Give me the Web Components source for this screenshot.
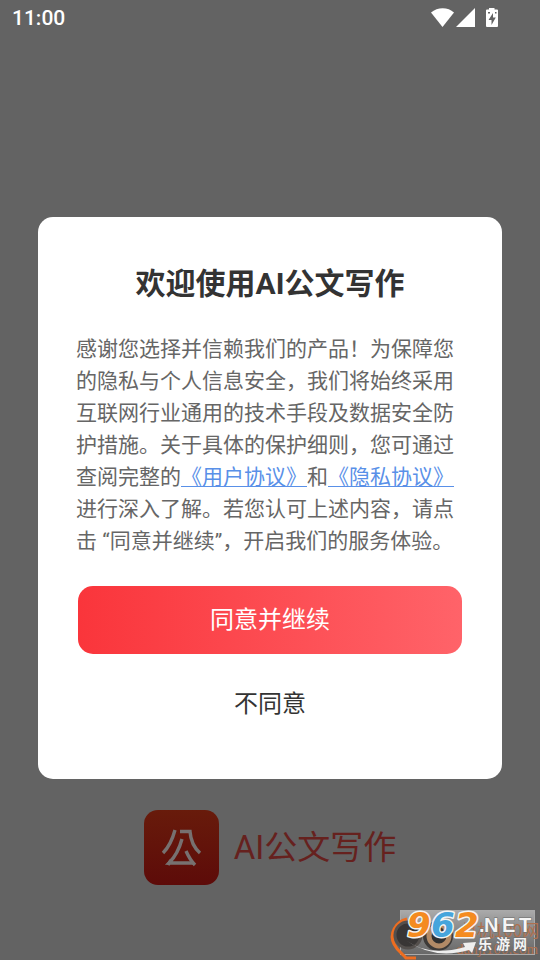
<!DOCTYPE html>
<html lang="zh-CN">
<head>
<meta charset="utf-8">
<meta name="viewport" content="width=device-width, initial-scale=1">
<title>AI公文写作</title>
<style>
  body { margin: 0; background: #636363; font-family: Roboto, "Noto Sans CJK SC", sans-serif; }
</style>
</head>
<body>
<app-screen>
  <status-bar slot="status">11:00</status-bar>
  <app-brand slot="brand">AI公文写作</app-brand>
  <consent-dialog slot="dialog">
    <span slot="title">欢迎使用AI公文写作</span>
    感谢您选择并信赖我们的产品！为保障您的隐私与个人信息安全，我们将始终采用互联网行业通用的技术手段及数据安全防护措施。关于具体的保护细则，您可通过查阅完整的<policy-link to="#terms">《用户协议》</policy-link>和<policy-link to="#privacy">《隐私协议》</policy-link>进行深入了解。若您认可上述内容，请点击 “同意并继续”，开启我们的服务体验。
    <action-button slot="actions" kind="primary">同意并继续</action-button>
    <action-button slot="actions" kind="plain">不同意</action-button>
  </consent-dialog>
  <site-watermark slot="watermark"></site-watermark>
</app-screen>

<script>
const define = (name, html) => customElements.define(name, class extends HTMLElement {
  constructor() {
    super();
    const t = document.createElement('template');
    t.innerHTML = html.trim();
    this.attachShadow({ mode: 'open' }).append(t.content.cloneNode(true));
  }
  connectedCallback() {
    const a = this.shadowRoot.querySelector('a');
    if (a && this.hasAttribute('to')) a.href = this.getAttribute('to');
  }
});

define('app-screen', `
<style>
  :host { display: grid; grid-template-rows: 36px 1fr; min-height: 100vh; position: relative; overflow: hidden; }
  main { display: grid; }
  slot[name=brand]::slotted(*) { grid-area: 1 / 1; align-self: end; justify-self: center; margin-bottom: 75px; }
  slot[name=dialog]::slotted(*) { grid-area: 1 / 1; align-self: center; margin: 0 38px; z-index: 1; }
  slot[name=watermark]::slotted(*) { position: absolute; right: 0; bottom: 0; z-index: 2; }
</style>
<slot name="status"></slot>
<main><slot name="brand"></slot><slot name="dialog"></slot></main>
<slot name="watermark"></slot>`);

define('status-bar', `
<style>
  :host { display: flex; align-items: center; justify-content: space-between; padding: 0 41px 0 12px; color: #fff; font-size: 21px; font-weight: 500; line-height: 38px; }
  svg { display: block; fill: #fff; }
</style>
<span><slot></slot></span>
<svg width="68" height="20" viewBox="0 0 68 20" aria-hidden="true">
  <path d="M0 4.500C6.500-1.200 17-1.200 23 4.500L11.500 19Z"/>
  <path d="M25 19L44 0V19Z"/>
  <path fill-rule="evenodd" d="M56 1.500H58V0H63.500V1.500H66Q67 1.500 67 2.500V18Q67 19 66 19H56Q55 19 55 18V2.500Q55 1.500 56 1.500ZM62 5L57.500 12H60.500V17L64.800 9.500H62ZM57 4V5.500H59V4ZM64 4V5.500H65.500V4Z"/>
</svg>`);

define('app-brand', `
<style>
  :host { display: flex; align-items: center; gap: 15px; color: #66211e; font-size: 33px; line-height: 48px; }
  svg { display: block; }
</style>
<svg width="75" height="75" viewBox="0 0 75 75" aria-hidden="true">
  <defs><linearGradient id="g" x2="0" y2="1"><stop stop-color="#681b0b"/><stop offset="1" stop-color="#5d0b09"/></linearGradient></defs>
  <rect width="75" height="75" rx="14" fill="url(#g)"/>
  <g fill="none" stroke="#777170" stroke-width="3.400">
    <path d="M31 20Q27 35 19 43"/>
    <path d="M36 21.500H46Q47 35 56 43"/>
    <path d="M38 29Q34 44 25 53H50"/>
    <path d="M42 41Q46 50 51 55M27 50L24 55"/>
  </g>
</svg>
<span><slot></slot></span>`);

define('consent-dialog', `
<style>
  :host { display: block; }
  section { background: #fff; border-radius: 15px; padding: 46px 38px 55px; }
  h1 { margin: 0 0 28px; text-align: center; color: #333; font-size: 30px; line-height: 42px; font-weight: 700; }
  p { margin: 0 0 29px; color: #666; font-size: 21px; line-height: 32px; text-spacing-trim: space-all; }
  div { display: grid; gap: 30px; padding: 0 2px; }
</style>
<section role="dialog" aria-labelledby="t">
  <h1 id="t"><slot name="title"></slot></h1>
  <p><slot></slot></p>
  <div><slot name="actions"></slot></div>
</section>`);

define('policy-link', `
<style>
  :host { display: inline; }
  a { color: #5990e8; text-decoration: underline; text-decoration-thickness: 1px; text-underline-offset: 2px; }
</style><a><slot></slot></a>`);

define('action-button', `
<style>
  :host { display: grid; }
  button { border: 0; padding: 0; background: none; color: #333; font: inherit; font-size: 24px; line-height: 40px; justify-self: center; }
  :host([kind=primary]) button { justify-self: stretch; padding: 14px 0; border-radius: 15px; color: #fff; background: linear-gradient(90deg, #fa353b, #ff6369); }
</style><button type="button"><slot></slot></button>`);

define('site-watermark', `
<style>
  :host { display: block; }
  svg { display: block; }
  .han { font-family: "Noto Sans CJK SC", sans-serif; }
  .num { font: italic 700 34px "DejaVu Sans", sans-serif; stroke: #f4f4f4; stroke-width: 3px; paint-order: stroke; stroke-linejoin: round; }
</style>
<svg width="160" height="70" viewBox="0 0 160 70">
  <defs><linearGradient id="w" x2="0" y2="1"><stop stop-color="#aaa"/><stop offset=".45" stop-color="#888"/><stop offset="1" stop-color="#686868"/></linearGradient></defs>
  <rect x="20.500" y="20.500" width="134" height="44" fill="url(#w)" stroke="#aaa" stroke-width="1"/>
  <path d="M27 29C15 32 9 44 14 54C18 62 23 64 26 68H36" fill="none" stroke="#ed6d20" stroke-width="3"/>
  <circle cx="28" cy="45" r="13" fill="#393635" stroke="#55504d" stroke-width="3"/>
  <circle cx="58" cy="46" r="15" fill="#3d3a38"/>
  <circle cx="59" cy="46" r="10" fill="#303030" stroke="#b28a66" stroke-width="5"/>
  <circle cx="59" cy="42" r="5" fill="#333"/>
  <g fill="#b0714f">
    <text class="han" x="80" y="47" font-size="17">单机100网</text>
    <text x="76" y="64" font-family="Liberation Serif, serif" font-size="15">danji100.com</text>
  </g>
  <path d="M27 51Q49 67 85 57L83 53L96 52L92 63L89 60Q55 70 27 51Z" fill="#eee"/>
  <g class="num"><text x="27" y="47" fill="#f48b20">9</text><text x="51" y="47" fill="#46a5dc">6</text><text x="75" y="47" fill="#f48b20">2</text></g>
  <g fill="#f5f5f5" stroke="#6b6b6b" stroke-width="1" paint-order="stroke" font-weight="700">
    <text y="42" font-family="Liberation Sans, sans-serif" font-size="20"><tspan x="99">.</tspan><tspan x="104">N</tspan><tspan x="122">E</tspan><tspan x="139">T</tspan></text>
    <text class="han" y="59" font-size="14"><tspan x="98">乐</tspan><tspan x="116">游</tspan><tspan x="133">网</tspan></text>
  </g>
</svg>`);
</script>
</body>
</html>
